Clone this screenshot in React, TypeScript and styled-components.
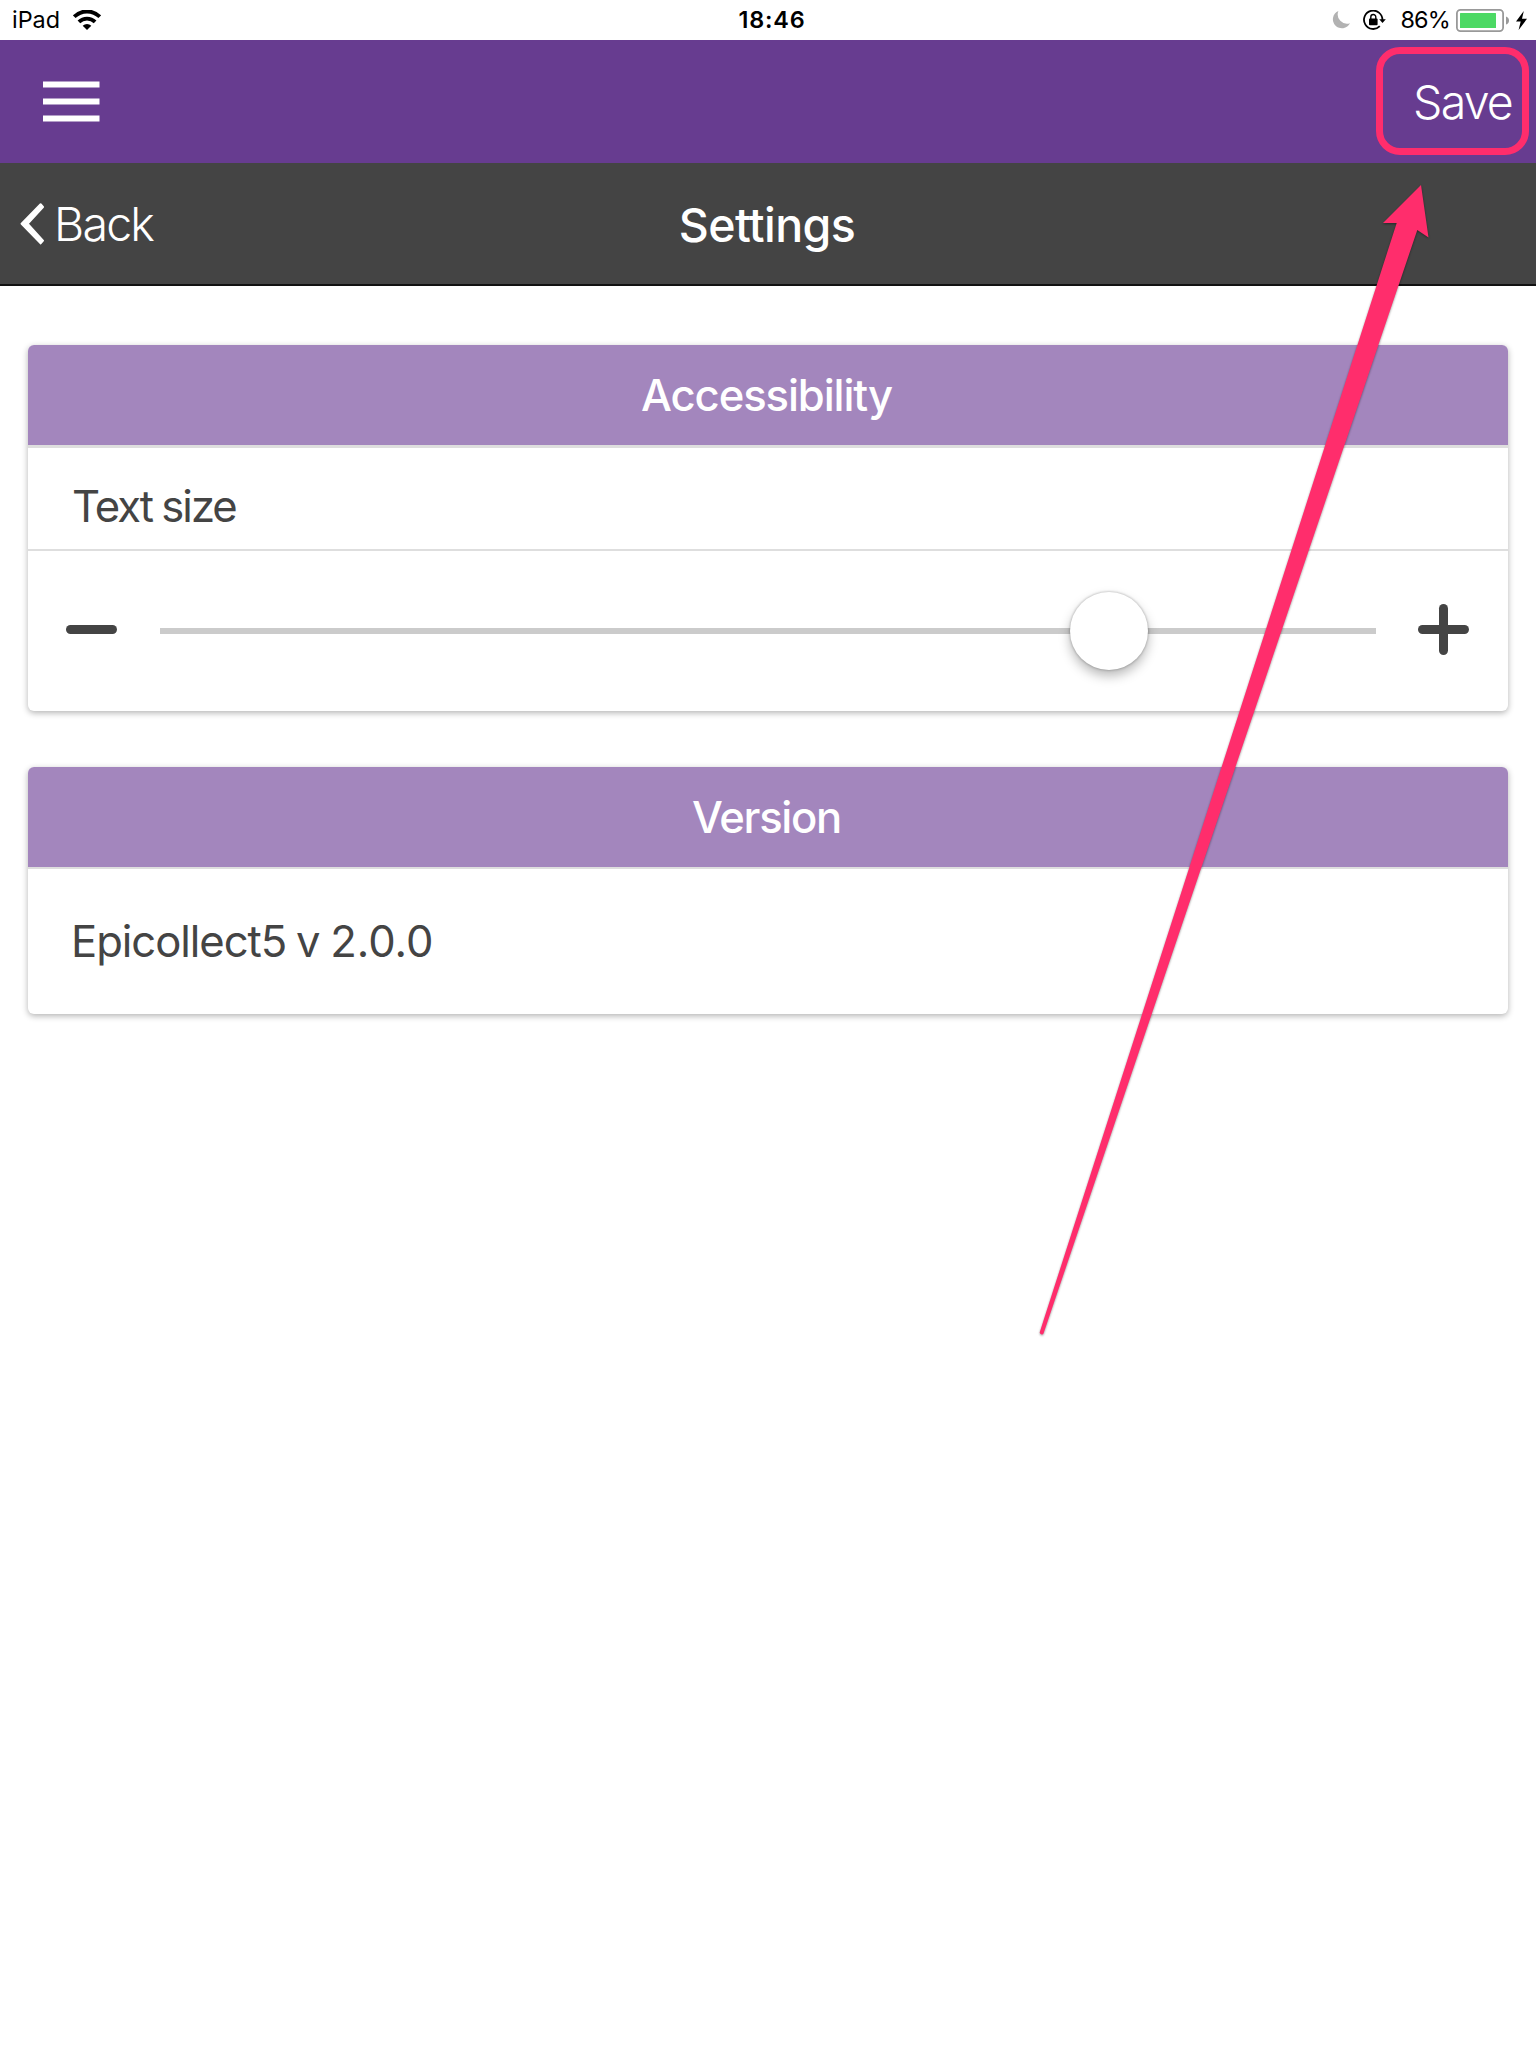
import React from "react";
import styled, { createGlobalStyle } from "styled-components";

const GlobalStyle = createGlobalStyle`
  html, body { margin: 0; padding: 0; background: #fff; }
  * { box-sizing: border-box; }
`;

const Screen = styled.div`
  position: relative;
  display: flex;
  flex-direction: column;
  width: 1536px;
  height: 2048px;
  overflow: hidden;
  background: #fff;
  color: #444;
  font-family: Inter, "Liberation Sans", sans-serif;
`;

const StatusBar = styled.header`
  display: grid;
  grid-template-columns: 1fr auto 1fr;
  align-items: center;
  height: 40px;
  padding: 0 9px 0 12px;
  color: #000;
  font-size: 23.4px;
  line-height: 40px;
`;

const StatusGroup = styled.div<{ $end?: boolean }>`
  display: flex;
  align-items: center;
  height: 40px;
  justify-content: ${(p) => (p.$end ? "flex-end" : "flex-start")};
`;

const StatusText = styled.span<{ $spacing: number }>`
  line-height: 40px;
  letter-spacing: ${(p) => p.$spacing}px;
`;

const Clock = styled.time`
  padding-left: 5px;
  font-weight: 600;
  letter-spacing: 0.8px;
`;

const WifiIcon = styled.svg`
  margin-left: 13px;
`;

const MoonIcon = styled.svg`
  margin-right: 13px;
`;

const LockIcon = styled.svg`
  margin-right: 13px;
`;

const BatteryIcon = styled.svg`
  margin: 1px 6px 0 6px;
`;

const AppBar = styled.nav`
  display: flex;
  align-items: center;
  justify-content: space-between;
  height: 123px;
  padding: 0 24px 0 43px;
  background: #673c90;
`;

const MenuButton = styled.button`
  display: flex;
  padding: 0;
  border: 0;
  background: none;
`;

const BarButton = styled.button`
  display: flex;
  align-items: center;
  padding: 0;
  border: 0;
  background: none;
  color: #fff;
  font-family: inherit;
  font-size: 46.5px;
  font-weight: 300;
  line-height: 60px;
  letter-spacing: -1.8px;
`;

const TitleBar = styled.div`
  display: grid;
  grid-template-columns: 1fr auto 1fr;
  align-items: center;
  height: 123px;
  padding: 0 22px 0 20px;
  border-bottom: 2px solid #111;
  background: #444;
`;

const Chevron = styled.svg`
  margin-right: 10px;
`;

const Title = styled.h1`
  margin: 0;
  padding-top: 2px;
  color: #fff;
  font-size: 46.5px;
  font-weight: 500;
  line-height: 60px;
  letter-spacing: -0.6px;
`;

const Content = styled.main`
  display: flex;
  flex-direction: column;
  gap: 56px;
  padding: 59px 28px 0;
`;

const Card = styled.section`
  overflow: hidden;
  border-radius: 6px;
  background: #fff;
  box-shadow: 0 2px 6px rgba(0, 0, 0, 0.3);
`;

const CardHeader = styled.h2<{ $line: number; $spacing: number }>`
  margin: 0;
  padding: 1px 3px 0 0;
  border-bottom: ${(p) => p.$line}px solid #dedede;
  background: #a386bd;
  color: #fff;
  font-size: 43.6px;
  font-weight: 500;
  line-height: 99px;
  letter-spacing: ${(p) => p.$spacing}px;
  text-align: center;
`;

const LabelRow = styled.div`
  height: 103px;
  padding: 17px 44px 0;
  border-bottom: 2px solid #dedede;
  font-size: 43.6px;
  line-height: 84px;
  letter-spacing: -2px;
  word-spacing: -1px;
`;

const VersionRow = styled.div`
  padding-left: 43px;
  font-size: 43.6px;
  line-height: 145px;
  letter-spacing: 0;
  word-spacing: -2.5px;
`;

const AppName = styled.span`
  letter-spacing: -1.05px;
`;

const SliderRow = styled.div`
  display: flex;
  align-items: center;
  justify-content: space-between;
  height: 160px;
  padding: 0 39px 3px 38px;
`;

const StepIcon = styled.svg`
  flex: none;
`;

const Track = styled.div`
  position: relative;
  width: 1216px;
  height: 6px;
  margin-top: 3px;
  background: #cbcbcb;
`;

const Knob = styled.div`
  position: absolute;
  left: 910px;
  top: -36px;
  width: 78px;
  height: 78px;
  border-radius: 50%;
  background: #fff;
  box-shadow: 0 0 2px 1px rgba(0, 0, 0, 0.16), 0 6px 12px rgba(0, 0, 0, 0.28);
`;

const Highlight = styled.div`
  position: absolute;
  left: 1376px;
  top: 47px;
  width: 153px;
  height: 108px;
  border: 7.5px solid #ff2d6c;
  border-radius: 24px;
`;

const Arrow = styled.svg`
  position: absolute;
  left: 0;
  top: 0;
  pointer-events: none;
  filter: drop-shadow(0.5px 1.5px 1.2px rgba(0, 0, 0, 0.4));
`;

export default function App() {
  return (
    <Screen>
      <GlobalStyle />
      <StatusBar>
        <StatusGroup>
          <StatusText $spacing={0}>iPad</StatusText>
          <WifiIcon width="28" height="20" viewBox="0 0 28 20">
            <path d="M1.2 6.7a18.2 18.2 0 0 1 25.6 0" fill="none" stroke="#000" strokeWidth="3.9" />
            <path d="M5.9 11.9a11.6 11.6 0 0 1 16.2 0" fill="none" stroke="#000" strokeWidth="3.8" />
            <path d="M14 20l-4.3-4.2a6.2 6.2 0 0 1 8.6 0z" />
          </WifiIcon>
        </StatusGroup>
        <Clock>18:46</Clock>
        <StatusGroup $end>
          <MoonIcon width="18" height="18" viewBox="0 0 18 18">
            <path d="M6.4 0A9 9 0 1 0 18 12.2 9.3 9.3 0 0 1 6.4 0z" fill="#b2b2b2" />
          </MoonIcon>
          <LockIcon width="24" height="20" viewBox="0 0 24 20">
            <path d="M19.4 10A9.2 9.2 0 1 0 16.8 16.2" fill="none" stroke="#000" strokeWidth="1.8" />
            <path d="M16.2 9.3h6.6l-3.3 3.7z" />
            <rect x="6" y="8.6" width="8.6" height="6.6" rx="0.9" />
            <path d="M7.8 9V7a2.5 2.5 0 0 1 5 0v2" fill="none" stroke="#000" strokeWidth="1.4" />
          </LockIcon>
          <StatusText $spacing={-0.8}>86%</StatusText>
          <BatteryIcon width="54" height="23" viewBox="0 0 54 23">
            <rect x="0.9" y="0.9" width="46.2" height="21.2" rx="3.6" fill="none" stroke="#999" strokeWidth="1.8" />
            <rect x="4" y="4" width="36" height="15" rx="0.6" fill="#4cd964" />
            <path d="M50 7.4c4 1.2 4 7 0 8.2z" fill="#999" />
          </BatteryIcon>
          <svg width="11" height="19" viewBox="0 0 11 19">
            <path d="M7.8 0L0 10.6h4.7L2.6 19 11 7.8H6z" />
          </svg>
        </StatusGroup>
      </StatusBar>

      <AppBar>
        <MenuButton aria-label="Menu">
          <svg width="57" height="41" viewBox="0 0 57 41" fill="#fff">
            <rect x="0" y="0.5" width="56.5" height="6" />
            <rect x="0" y="17.5" width="56.5" height="6" />
            <rect x="0" y="34.5" width="56.5" height="6" />
          </svg>
        </MenuButton>
        <BarButton>Save</BarButton>
      </AppBar>

      <TitleBar>
        <BarButton>
          <Chevron width="24" height="42" viewBox="0 0 24 42">
            <path
              d="M1.6 20.8L20.6 1.2L23 4L7.6 20.8L23 37.6L20.6 40.4Z"
              fill="#fff"
              stroke="#fff"
              strokeWidth="2"
              strokeLinejoin="round"
            />
          </Chevron>
          Back
        </BarButton>
        <Title>Settings</Title>
      </TitleBar>

      <Content>
        <Card>
          <CardHeader $line={3} $spacing={-1.1}>Accessibility</CardHeader>
          <LabelRow>Text size</LabelRow>
          <SliderRow>
            <StepIcon width="51" height="51" viewBox="0 0 51 51">
              <rect x="0" y="21" width="51" height="9" rx="4.5" fill="#444" />
            </StepIcon>
            <Track>
              <Knob />
            </Track>
            <StepIcon width="51" height="51" viewBox="0 0 51 51">
              <rect x="0" y="21" width="51" height="9" rx="4.5" fill="#444" />
              <rect x="21" y="0" width="9" height="51" rx="4.5" fill="#444" />
            </StepIcon>
          </SliderRow>
        </Card>
        <Card>
          <CardHeader $line={2} $spacing={-1.3}>Version</CardHeader>
          <VersionRow>
            <AppName>Epicollect5</AppName> v 2.0.0
          </VersionRow>
        </Card>
      </Content>

      <Highlight />
      <Arrow width="1536" height="1400" viewBox="0 0 1536 1400">
        <path
          d="M1421 185L1428.5 237.5L1417.3 230L1043.6 1333.2A2 2 0 0 1 1039.8 1332L1396.7 223L1383 223Z"
          fill="#ff2d6c"
        />
      </Arrow>
    </Screen>
  );
}
